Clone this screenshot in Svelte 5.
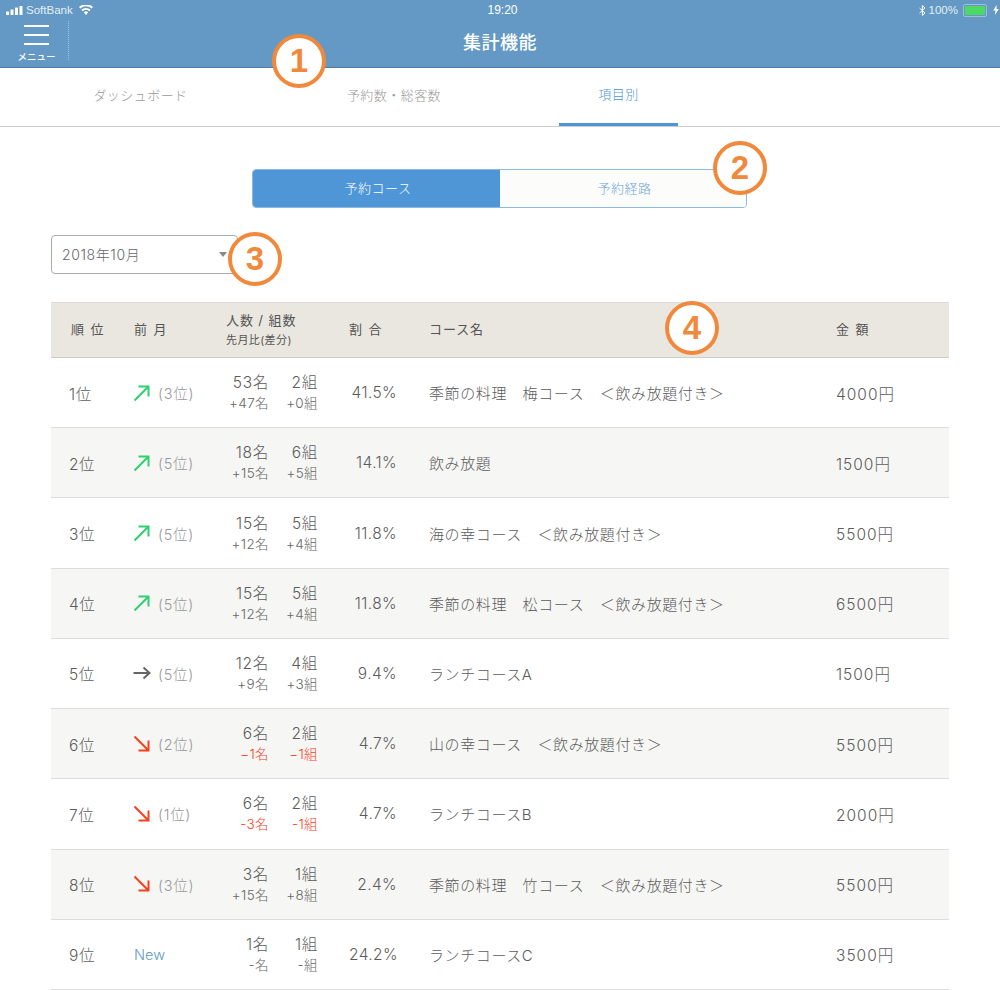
<script>
	const rows = [
		{ rank: 1, dir: 'up', prev: '(3位)', n: '53名', g: '2組', dn: '+47名', dg: '+0組', share: '41.5%', name: '季節の料理　梅コース　＜飲み放題付き＞', price: '4000円' },
		{ rank: 2, dir: 'up', prev: '(5位)', n: '18名', g: '6組', dn: '+15名', dg: '+5組', share: '14.1%', name: '飲み放題', price: '1500円' },
		{ rank: 3, dir: 'up', prev: '(5位)', n: '15名', g: '5組', dn: '+12名', dg: '+4組', share: '11.8%', name: '海の幸コース　＜飲み放題付き＞', price: '5500円' },
		{ rank: 4, dir: 'up', prev: '(5位)', n: '15名', g: '5組', dn: '+12名', dg: '+4組', share: '11.8%', name: '季節の料理　松コース　＜飲み放題付き＞', price: '6500円' },
		{ rank: 5, dir: 'same', prev: '(5位)', n: '12名', g: '4組', dn: '+9名', dg: '+3組', share: '9.4%', name: 'ランチコースA', price: '1500円' },
		{ rank: 6, dir: 'down', prev: '(2位)', n: '6名', g: '2組', dn: '−1名', dg: '−1組', share: '4.7%', name: '山の幸コース　＜飲み放題付き＞', price: '5500円', minus: true },
		{ rank: 7, dir: 'down', prev: '(1位)', n: '6名', g: '2組', dn: '-3名', dg: '-1組', share: '4.7%', name: 'ランチコースB', price: '2000円', minus: true },
		{ rank: 8, dir: 'down', prev: '(3位)', n: '3名', g: '1組', dn: '+15名', dg: '+8組', share: '2.4%', name: '季節の料理　竹コース　＜飲み放題付き＞', price: '5500円' },
		{ rank: 9, dir: 'new', prev: '', n: '1名', g: '1組', dn: '-名', dg: '-組', share: '24.2%', name: 'ランチコースC', price: '3500円' }
	];
</script>

<div class="page">
	<div class="top">
		<div class="status">
			<div class="status-left">
				<svg width="17" height="9" viewBox="0 0 17 9"><rect x="0" y="5.500" width="3" height="3.500" rx=".6" /><rect x="4.500" y="3.500" width="3" height="5.500" rx=".6" /><rect x="9" y="1.500" width="3" height="7.500" rx=".6" /><rect x="13.500" y="0" width="3" height="9" rx=".6" /></svg>
				<span>SoftBank</span>
				<svg class="wifi" width="14" height="10" viewBox="0 0 14 10"><path d="M7 10 4.800 7.400a3.200 3.200 0 0 1 4.400 0zM3.700 6.200 2.400 4.700a7 7 0 0 1 9.200 0l-1.300 1.500a5 5 0 0 0-6.600 0zM1.400 3.500 0 2a10.400 10.400 0 0 1 14 0l-1.400 1.500a8.400 8.400 0 0 0-11.200 0z" /></svg>
			</div>
			<div class="clock">19:20</div>
			<div class="status-right">
				<svg width="7" height="11" viewBox="0 0 7 11"><path d="M.5 3 6 8 3.400 10.400V.6L6 3 .5 8" fill="none" stroke="#fff" stroke-width="1" /></svg>
				<span>100%</span>
				<div class="battery"><div class="charge"></div></div>
				<svg width="6" height="10" viewBox="0 0 5 9"><path d="M3 0 0 5h2L1.500 9 5 3.600H3z" /></svg>
			</div>
		</div>
		<div class="nav">
			<div class="menu">
				<div class="burger"><i></i><i></i><i></i></div>
				<div class="menu-label">メニュー</div>
			</div>
			<div class="title">集計機能</div>
		</div>
	</div>

	<div class="tabs">
		<div class="tab">ダッシュボード</div>
		<div class="tab">予約数・総客数</div>
		<div class="tab active">項目別</div>
	</div>

	<div class="content">
		<div class="segment">
			<div class="seg on">予約コース</div>
			<div class="seg">予約経路</div>
		</div>

		<div class="select">
			<span>2018年10月</span>
			<b class="caret"></b>
		</div>

		<div class="table">
			<div class="row head">
				<div class="c-rank sp">順 位</div>
				<div class="sp">前 月</div>
				<div class="c-people">
					<div>人数 / 組数</div>
					<small>先月比(差分)</small>
				</div>
				<div class="sp">割 合</div>
				<div class="c-name">コース名</div>
				<div class="sp">金 額</div>
			</div>
			{#each rows as r}
				<div class="row body">
					<div class="c-rank">{r.rank}位</div>
					<div class="c-prev">
						{#if r.dir === 'new'}
							<span class="new">New</span>
						{:else}
							<svg class="arrow {r.dir}" width="18" height="18" viewBox="0 0 18 18">
								{#if r.dir === 'up'}
									<path d="M1.500 16.500 15.500 2.500M5.500 2.500h10v10" />
								{:else if r.dir === 'down'}
									<path d="M1.500 1.500 15.500 15.500M15.500 5.500v10h-10" />
								{:else}
									<path d="M.5 9h16M10.500 3.500 16.500 9l-6 5.500" />
								{/if}
							</svg>
							<span class="prev">{r.prev}</span>
						{/if}
					</div>
					<div class="c-people nums">
						<div class="line"><span>{r.n}</span><span>{r.g}</span></div>
						<div class="line diff" class:minus={r.minus}><span>{r.dn}</span><span>{r.dg}</span></div>
					</div>
					<div class="c-share">{r.share}</div>
					<div class="c-name">{r.name}</div>
					<div class="c-price">{r.price}</div>
				</div>
			{/each}
		</div>
	</div>

	<div class="mark m1">1</div>
	<div class="mark m2">2</div>
	<div class="mark m3">3</div>
	<div class="mark m4">4</div>
</div>

<style>
	:global(body) {
		margin: 0;
		background: #fff;
	}
	.page {
		position: relative;
		width: 1000px;
		height: 990px;
		overflow: hidden;
		font-family: Inter, 'Noto Sans CJK JP', sans-serif;
		font-weight: 300;
		color: #555;
	}
	.top {
		height: 67px;
		background: #6399c4;
		border-bottom: 1px solid #4d7ba3;
		color: #fff;
	}
	.status {
		display: flex;
		align-items: center;
		justify-content: space-between;
		height: 20px;
		padding: 0 1px 0 6px;
		font-size: 11.500px;
		font-family: 'Liberation Sans', sans-serif;
		color: #e4eef6;
	}
	.status svg {
		fill: #fff;
	}
	.status-left,
	.status-right {
		display: flex;
		align-items: center;
		gap: 3px;
		width: 160px;
	}
	.status-left .wifi {
		margin-left: 3px;
	}
	.status-right {
		justify-content: flex-end;
	}
	.clock {
		font-size: 12px;
		color: #fff;
	}
	.battery {
		width: 20px;
		height: 9px;
		padding: 1px;
		margin: 0 3px 0 2px;
		border: 1px solid #9dbfda;
		border-radius: 2px;
	}
	.charge {
		height: 100%;
		background: #4cd964;
		border-radius: 1px;
	}
	.nav {
		position: relative;
		display: flex;
		height: 47px;
		align-items: center;
		justify-content: center;
	}
	.menu {
		position: absolute;
		left: 0;
		top: 1px;
		width: 69px;
		height: 39px;
		border-right: 1px dotted #a3c2db;
		box-sizing: border-box;
		display: flex;
		flex-direction: column;
		align-items: center;
		padding-left: 6px;
		padding-right: 1px;
		font-family: 'Noto Sans CJK JP', sans-serif;
	}
	.burger {
		display: flex;
		flex-direction: column;
		gap: 7px;
		width: 25px;
		margin-top: 4px;
	}
	.burger i {
		display: block;
		height: 2px;
		background: #fff;
	}
	.menu-label {
		font-size: 9.500px;
		font-weight: 500;
		line-height: 11px;
		margin-top: 6px;
	}
	.title {
		font-size: 18px;
		letter-spacing: 0.5px;
		font-weight: 500;
		font-family: 'Noto Sans CJK JP', sans-serif;
		margin-top: -5px;
	}
	.tabs {
		display: flex;
		height: 58px;
		padding: 0 22px;
		border-bottom: 1px solid #ccc;
	}
	.tab {
		display: flex;
		align-items: center;
		justify-content: center;
		font-size: 13px;
		letter-spacing: 0.45px;
		color: #999;
		margin-top: -5px;
		height: 63px;
	}
	.tabs .tab:nth-child(1) {
		width: 237px;
	}
	.tabs .tab:nth-child(2) {
		width: 270px;
	}
	.tabs .tab:nth-child(3) {
		width: 119px;
		margin-left: 30px;
		box-sizing: border-box;
		color: #4f96d6;
		border-bottom: 3px solid #4f96d6;
	}
	.content {
		padding: 42px 51px 0;
	}
	.segment {
		display: flex;
		width: 495px;
		height: 39px;
		margin: 0 auto;
		border: 1px solid #8db8e0;
		border-radius: 4px;
		overflow: hidden;
		box-sizing: border-box;
		font-size: 13px;
		letter-spacing: 0.5px;
		position: relative;
		left: -1px;
	}
	.seg {
		flex: 1;
		display: flex;
		align-items: center;
		justify-content: center;
		padding: 0 0 2px 4px;
		background: #fcfcfa;
		color: #6ba5da;
	}
	.seg.on {
		flex: 0 0 247px;
		box-sizing: border-box;
		background: #4f96d6;
		color: #fff;
	}
	.select {
		display: flex;
		align-items: center;
		justify-content: space-between;
		box-sizing: border-box;
		width: 187px;
		height: 39px;
		margin-top: 27px;
		padding: 0 11px 2px 10px;
		border: 1px solid #aaa;
		border-radius: 4px;
		font-size: 14px;
		letter-spacing: 0.6px;
		color: #666;
	}
	.caret {
		margin-right: -1px;
		margin-top: 2px;
		border: 4px solid transparent;
		border-top: 5px solid #888;
		border-bottom: 0;
	}
	.table {
		margin-top: 28px;
	}
	.row {
		display: grid;
		grid-template-columns: 83px 92px 123px 80px 407px 1fr;
		align-items: center;
	}
	.head {
		height: 56px;
		box-sizing: border-box;
		background: #eae7e0;
		border-top: 1px solid #dedbd4;
		border-bottom: 1px solid #cfcdc7;
		font-size: 13px;
		letter-spacing: 0.9px;
		font-weight: 400;
		color: #555;
	}
	.head .sp,
	.head .c-name {
		margin-top: -3px;
	}
	.head .c-people div {
		line-height: 20px;
	}
	.head small {
		display: block;
		font-size: 11px;
		line-height: 21px;
		letter-spacing: 0.4px;
	}
	.head .c-people {
		margin-top: 1px;
	}
	.sp {
		word-spacing: 1px;
	}
	.head .c-rank {
		padding-left: 20px;
	}
	.body {
		height: 70.220px;
		box-sizing: border-box;
		border-bottom: 1px solid #ddd;
		font-size: 15px;
		letter-spacing: 0.6px;
		color: #5c5c5c;
	}
	.body:nth-child(odd) {
		background: #f6f6f4;
	}
	.body .c-rank {
		padding-left: 18px;
		font-size: 15.500px;
	}
	.c-prev {
		display: flex;
		align-items: center;
		gap: 7px;
		margin-left: -1px;
	}
	.prev {
		color: #999;
		font-size: 14.500px;
		letter-spacing: 0.7px;
	}
	.new {
		color: #5f9ac7;
		font-size: 14.500px;
		margin-left: 1px;
		letter-spacing: 0;
	}
	.arrow {
		fill: none;
		stroke-width: 2;
		stroke: #666;
	}
	.arrow.up {
		stroke: #2fd06f;
	}
	.arrow.down {
		stroke: #f8401f;
	}
	.nums {
		width: 92px;
		padding-top: 1px;
	}
	.line {
		display: grid;
		grid-template-columns: 43px 49px;
		text-align: right;
		font-size: 15.500px;
		letter-spacing: 0.7px;
		line-height: 20px;
	}
	.diff {
		font-size: 13.500px;
		letter-spacing: 0.4px;
		line-height: 20px;
		color: #666;
	}
	.diff.minus {
		color: #f8401f;
	}
	.c-share {
		width: 48px;
		text-align: right;
		white-space: nowrap;
		font-size: 15.500px;
		letter-spacing: 0.4px;
	}
	.c-price {
		font-size: 15.500px;
		letter-spacing: 1px;
	}
	.c-name {
		white-space: nowrap;
	}
	.mark {
		position: absolute;
		box-sizing: border-box;
		width: 54px;
		height: 54px;
		border: 4px solid #f0893b;
		border-radius: 50%;
		background: #fff;
		color: #f0893b;
		font-family: 'Liberation Sans', sans-serif;
		font-size: 33px;
		font-weight: 700;
		display: flex;
		align-items: center;
		justify-content: center;
	}
	.m1 {
		left: 272px;
		top: 34px;
	}
	.m2 {
		left: 713px;
		top: 141px;
	}
	.m3 {
		left: 228px;
		top: 232px;
	}
	.m4 {
		left: 665px;
		top: 301px;
	}
</style>
